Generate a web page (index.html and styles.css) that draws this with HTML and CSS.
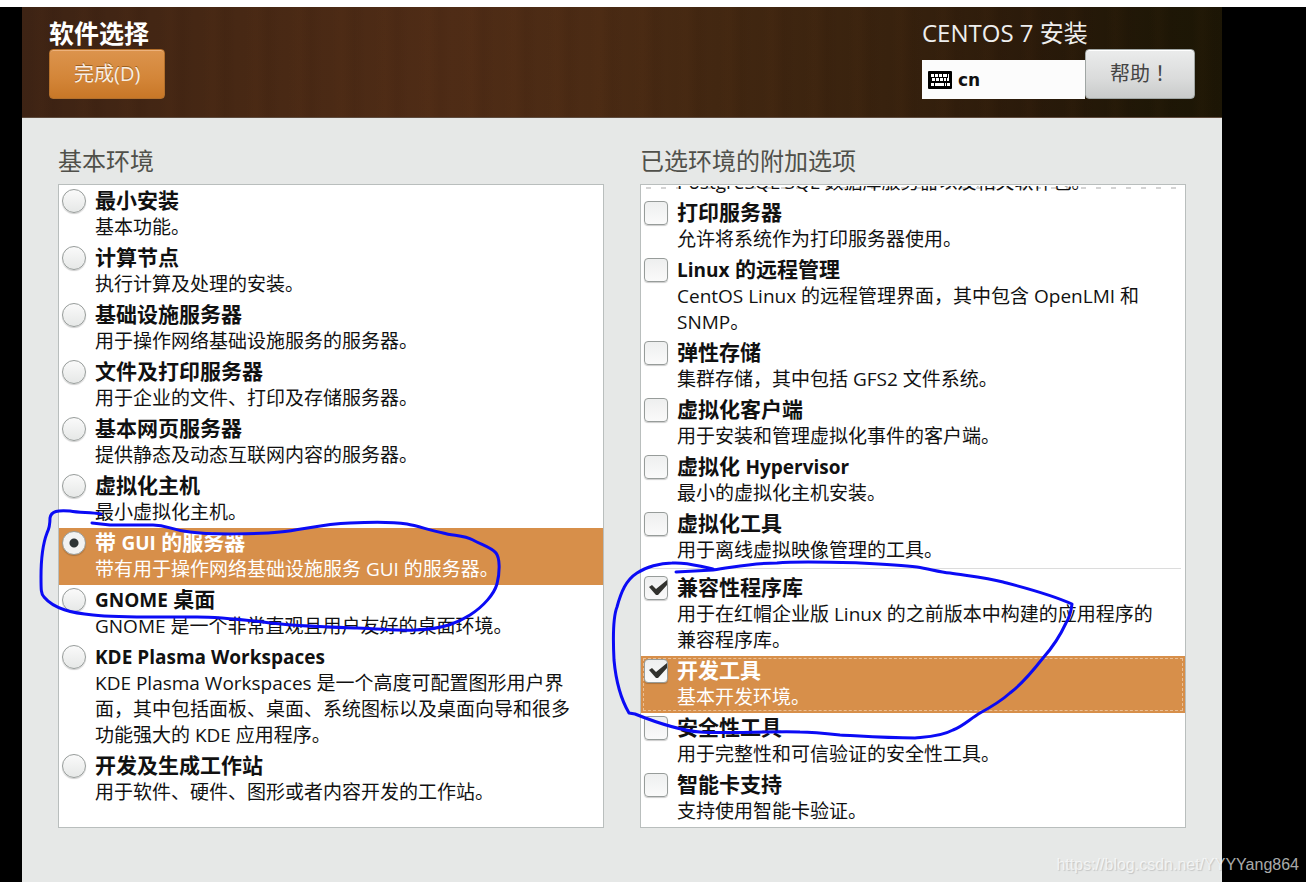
FILE: index.html
```html
<!DOCTYPE html>
<html lang="zh-CN">
<head>
<meta charset="utf-8">
<title>软件选择</title>
<link rel="stylesheet" href="styles.css">
</head>
<body>
<div class="stage">
  <div class="screen">
    <header class="topbar">
      <div class="topbar-left">
        <h1 class="title">软件选择</h1>
        <button class="btn btn-done" type="button">完成(D)</button>
      </div>
      <div class="topbar-right">
        <div class="product">CENTOS 7 安装</div>
        <div class="keyboard">
          <svg class="keyboard-icon" viewBox="0 0 24 18" aria-hidden="true">
            <rect width="24" height="18" rx="1" fill="#000"/>
            <path fill="#fff" d="M3 3h3v3H3zM7 3h3v3H7zM11 3h3v3h-3zM15 3h4v3h-4zM4 7h3v3H4zM8 7h3v3H8zM12 7h3v3h-3zM16 7h2v3h-2zM20 3h1v7h-2V7h1zM3 12h3v3H3zM7 12h9v3H7zM17 12h1v3h-1zM19 12h3v3h-3z"/>
          </svg>
          <span>cn</span>
        </div>
        <button class="btn btn-help" type="button">帮助<span lang="zh-TW">！</span></button>
      </div>
    </header>
    <main class="columns">
      <section class="column">
        <h2 class="heading">基本环境</h2>
        <div class="list">
          <label class="row"><input class="radio" type="radio" name="env"><span class="text"><b class="name">最小安装</b><span class="desc">基本功能。</span></span></label>
          <label class="row"><input class="radio" type="radio" name="env"><span class="text"><b class="name">计算节点</b><span class="desc">执行计算及处理的安装。</span></span></label>
          <label class="row"><input class="radio" type="radio" name="env"><span class="text"><b class="name">基础设施服务器</b><span class="desc">用于操作网络基础设施服务的服务器。</span></span></label>
          <label class="row"><input class="radio" type="radio" name="env"><span class="text"><b class="name">文件及打印服务器</b><span class="desc">用于企业的文件、打印及存储服务器。</span></span></label>
          <label class="row"><input class="radio" type="radio" name="env"><span class="text"><b class="name">基本网页服务器</b><span class="desc">提供静态及动态互联网内容的服务器。</span></span></label>
          <label class="row"><input class="radio" type="radio" name="env"><span class="text"><b class="name">虚拟化主机</b><span class="desc">最小虚拟化主机。</span></span></label>
          <label class="row row-selected"><input class="radio" type="radio" name="env" checked><span class="text"><b class="name">带 <span class="latin">GUI</span> 的服务器</b><span class="desc">带有用于操作网络基础设施服务 GUI 的服务器。</span></span></label>
          <label class="row"><input class="radio" type="radio" name="env"><span class="text"><b class="name"><span class="latin">GNOME</span> 桌面</b><span class="desc">GNOME 是一个非常直观且用户友好的桌面环境。</span></span></label>
          <label class="row"><input class="radio" type="radio" name="env"><span class="text"><b class="name"><span class="latin">KDE Plasma Workspaces</span></b><span class="desc">KDE Plasma Workspaces 是一个高度可配置图形用户界<br>面，其中包括面板、桌面、系统图标以及桌面向导和很多<br>功能强大的 KDE 应用程序。</span></span></label>
          <label class="row"><input class="radio" type="radio" name="env"><span class="text"><b class="name">开发及生成工作站</b><span class="desc">用于软件、硬件、图形或者内容开发的工作站。</span></span></label>
        </div>
      </section>
      <section class="column">
        <h2 class="heading">已选环境的附加选项</h2>
        <div class="list">
          <div class="scrolled"><span class="desc">PostgreSQL SQL 数据库服务器以及相关软件包。</span></div>
          <label class="row"><input class="check" type="checkbox"><span class="text"><b class="name">打印服务器</b><span class="desc">允许将系统作为打印服务器使用。</span></span></label>
          <label class="row"><input class="check" type="checkbox"><span class="text"><b class="name"><span class="latin">Linux</span> 的远程管理</b><span class="desc">CentOS Linux 的远程管理界面，其中包含 OpenLMI 和<br>SNMP。</span></span></label>
          <label class="row"><input class="check" type="checkbox"><span class="text"><b class="name">弹性存储</b><span class="desc">集群存储，其中包括 GFS2 文件系统。</span></span></label>
          <label class="row"><input class="check" type="checkbox"><span class="text"><b class="name">虚拟化客户端</b><span class="desc">用于安装和管理虚拟化事件的客户端。</span></span></label>
          <label class="row"><input class="check" type="checkbox"><span class="text"><b class="name">虚拟化 <span class="latin">Hypervisor</span></b><span class="desc">最小的虚拟化主机安装。</span></span></label>
          <label class="row"><input class="check" type="checkbox"><span class="text"><b class="name">虚拟化工具</b><span class="desc">用于离线虚拟映像管理的工具。</span></span></label>
          <hr class="separator">
          <label class="row"><input class="check" type="checkbox" checked><span class="text"><b class="name">兼容性程序库</b><span class="desc">用于在红帽企业版 Linux 的之前版本中构建的应用程序的<br>兼容程序库。</span></span></label>
          <label class="row row-selected row-focused"><input class="check" type="checkbox" checked><span class="text"><b class="name">开发工具</b><span class="desc">基本开发环境。</span></span></label>
          <label class="row"><input class="check" type="checkbox"><span class="text"><b class="name">安全性工具</b><span class="desc">用于完整性和可信验证的安全性工具。</span></span></label>
          <label class="row"><input class="check" type="checkbox"><span class="text"><b class="name">智能卡支持</b><span class="desc">支持使用智能卡验证。</span></span></label>
        </div>
      </section>
    </main>
  </div>
</div>
<svg class="ink" width="1309" height="884" viewBox="0 0 1309 884" aria-hidden="true">
  <path d="M101 514C90 512 80 513 70 511C58 510 51 511 50 518C50 526 49 529 47 533C42 546 41 560 41 577C41 590 41 594 44 597C54 609 72 613 93 615C120 618 150 617 197 617C220 617 245 620 263 622C290 626 325 627 357 628C385 629 400 631 415 630C445 629 459 622 470 615C484 606 494 594 497 584C500 572 500 558 496 553C491 547 482 545 473 540C464 535 453 536 443 533C429 530 418 526 407 524C388 521 369 522 350 523C321 524 302 530 280 532C260 534 210 535 190 532C170 530 168 525 153 525L110 525L92 523"/>
  <path d="M676 572L713 570C736 567 751 563 777 563C798 561 827 562 860 563C880 564 900 565 917 567C930 569 939 572 950 573C969 576 987 578 1003 582C1026 588 1050 594 1072 604C1071 612 1070 617 1066 623C1060 636 1052 648 1043 658C1032 672 1022 684 1010 693C1000 702 991 707 980 713C970 719 962 727 953 730C940 737 925 737 915 738C885 738 860 736 840 735C822 733 811 732 800 732C770 731 720 734 700 732C675 730 650 720 635 714L629 713C622 701 616 682 614 660C613 640 613 617 617 607C621 592 626 580 637 573C646 567 660 563 672 563C688 562 697 566 713 569"/>
</svg>
<div class="watermark">https://blog.csdn.net/YYYYang864</div>
</body>
</html>
```
FILE: styles.css
```css
* {
  box-sizing: border-box;
}

body {
  position: relative;
  display: flex;
  min-height: 100vh;
  margin: 0;
  padding: 7px 3px 2px 0;
  background: #fff;
  color: #111;
  font-family: "Open Sans", "Noto Sans CJK SC", sans-serif;
  font-size: 19px;
}

.stage {
  display: flex;
  flex: 1;
  padding: 0 84px 0 22px;
  background: #000;
}

.screen {
  display: flex;
  flex: 1;
  flex-direction: column;
  background: #e6e8e7;
}

.topbar {
  display: flex;
  justify-content: space-between;
  padding: 10px 27px 18px;
  border-bottom: 1px solid #5d4a3c;
  background:
    repeating-linear-gradient(90deg, rgba(110, 60, 25, 0) 0 9px, rgba(110, 60, 25, 0.05) 17px 20px, rgba(30, 10, 0, 0.06) 31px, rgba(110, 60, 25, 0) 43px),
    linear-gradient(94deg, #3d2314 0%, #472814 18%, #4f2c16 35%, #4b2b14 48%, #422711 58%, #38220e 72%, #2a1a0a 84%, #1e1706 95%, #1c1605 100%);
}

.topbar-left {
  display: flex;
  flex-direction: column;
  align-items: flex-start;
}

.title {
  margin: 0;
  color: #fff;
  font-size: 25px;
  font-weight: 700;
  line-height: 32px;
}

.btn {
  border: 1px solid;
  border-radius: 4px;
  padding: 0 24px;
  font-family: inherit;
  font-size: 20px;
  line-height: 48px;
}

.btn-done {
  border-color: #b4702b;
  background: linear-gradient(#dc944d, #d38538 60%, #c87727);
  box-shadow: inset 0 1px 0 #edb27c;
  color: #f8eee4;
  text-shadow: 0 -1px 0 #9c6020;
}

.topbar-right {
  display: grid;
  grid-template-columns: 163px auto;
  grid-template-rows: 32px 50px;
  align-items: end;
}

.product {
  grid-column: 1 / -1;
  color: #eee;
  font-size: 24px;
  line-height: 32px;
}

.keyboard {
  display: flex;
  align-items: center;
  gap: 6px;
  height: 39px;
  padding-left: 6px;
  background: #fcfcfc;
  font-family: "DejaVu Sans", sans-serif;
  font-size: 17px;
  font-weight: 700;
}

.keyboard-icon {
  width: 24px;
  height: 18px;
}

.btn-help {
  border-color: #a0a6a4;
  background: linear-gradient(#ebecec, #dadbdb 60%, #c9cbca);
  box-shadow: inset 0 1px 0 #fff;
  color: #444;
}

.btn-help :lang(zh-TW) {
  font-family: "Noto Sans CJK TC", sans-serif;
  line-height: 1;
}

.columns {
  display: grid;
  grid-template-columns: 1fr 1fr;
  gap: 36px;
  flex: 1;
  align-items: start;
  padding: 26px 36px 54px;
}

.column {
  display: flex;
  flex-direction: column;
  align-self: stretch;
}

.heading {
  margin: 0;
  color: #50504a;
  font-size: 24px;
  font-weight: 400;
  line-height: 34px;
  padding-bottom: 6px;
}

.list {
  flex: 1;
  border: 1px solid #b9bebd;
  padding-top: 1px;
  background: #fff;
}

.row {
  display: flex;
  align-items: flex-start;
  gap: 9px;
  padding: 2px 3px 3px;
}

.text {
  display: flex;
  flex-direction: column;
  line-height: 26px;
  white-space: nowrap;
}

.name {
  padding-bottom: 2px;
  font-size: 21px;
  line-height: 24px;
}

.latin {
  font-size: 19px;
  line-height: 1;
}

.desc {
  font-size: 19px;
}

.row-selected {
  background: #d78f4a;
  color: #fff;
}

.row-focused {
  outline: 1px dashed #eabf95;
  outline-offset: -3px;
}

.radio,
.check {
  flex: none;
  width: 24px;
  height: 24px;
  margin: 1px 0 0;
  appearance: none;
  border: 1px solid #979c9a;
  background: linear-gradient(#eeefef, #fafafa);
}

.radio {
  border-radius: 50%;
  background: linear-gradient(#fafafa, #e6e8e7);
  box-shadow: 0 1px 1px rgba(0, 0, 0, 0.2);
}

.radio:checked {
  background: radial-gradient(circle, #2e3436 4px, #f2f2f2 5px);
}

.check {
  border-radius: 4px;
  box-shadow: 0 1px 1px rgba(0, 0, 0, 0.2);
}

.check:checked {
  background:
    url("data:image/svg+xml,%3Csvg xmlns='http://www.w3.org/2000/svg' viewBox='0 0 22 22'%3E%3Cpath d='M4 10L7 8L11 12L22 3V8L13 18H11Z' fill='%2332322e'/%3E%3C/svg%3E") center / 22px 22px no-repeat,
    linear-gradient(#eeefef, #fafafa);
}

.scrolled {
  position: relative;
  display: flex;
  align-items: flex-end;
  height: 12px;
  padding: 0 0 3px 36px;
  overflow: hidden;
  line-height: 26px;
  white-space: nowrap;
}

.scrolled::before {
  content: "";
  position: absolute;
  top: 1px;
  left: 0;
  right: 0;
  height: 2px;
  background: repeating-linear-gradient(90deg, #fff 0 5px, #d4d4d4 5px 10px, #fff 10px 15px);
}

.scrolled .desc {
  position: relative;
}

.separator {
  margin: 2px 4px 4px;
  border: 0;
  border-top: 1px solid #dcdcdc;
}

.ink {
  position: absolute;
  top: 0;
  left: 0;
  fill: none;
  stroke: #0b0bf5;
  stroke-width: 3;
  stroke-linecap: round;
  stroke-linejoin: round;
  pointer-events: none;
}

.watermark {
  position: absolute;
  right: 10px;
  bottom: 10px;
  color: rgba(255, 255, 255, 0.68);
  font-family: "Liberation Sans", Arial, sans-serif;
  font-size: 16px;
  line-height: 18px;
  text-shadow: 1px 1px 1px rgba(0, 0, 0, 0.15);
}
```
